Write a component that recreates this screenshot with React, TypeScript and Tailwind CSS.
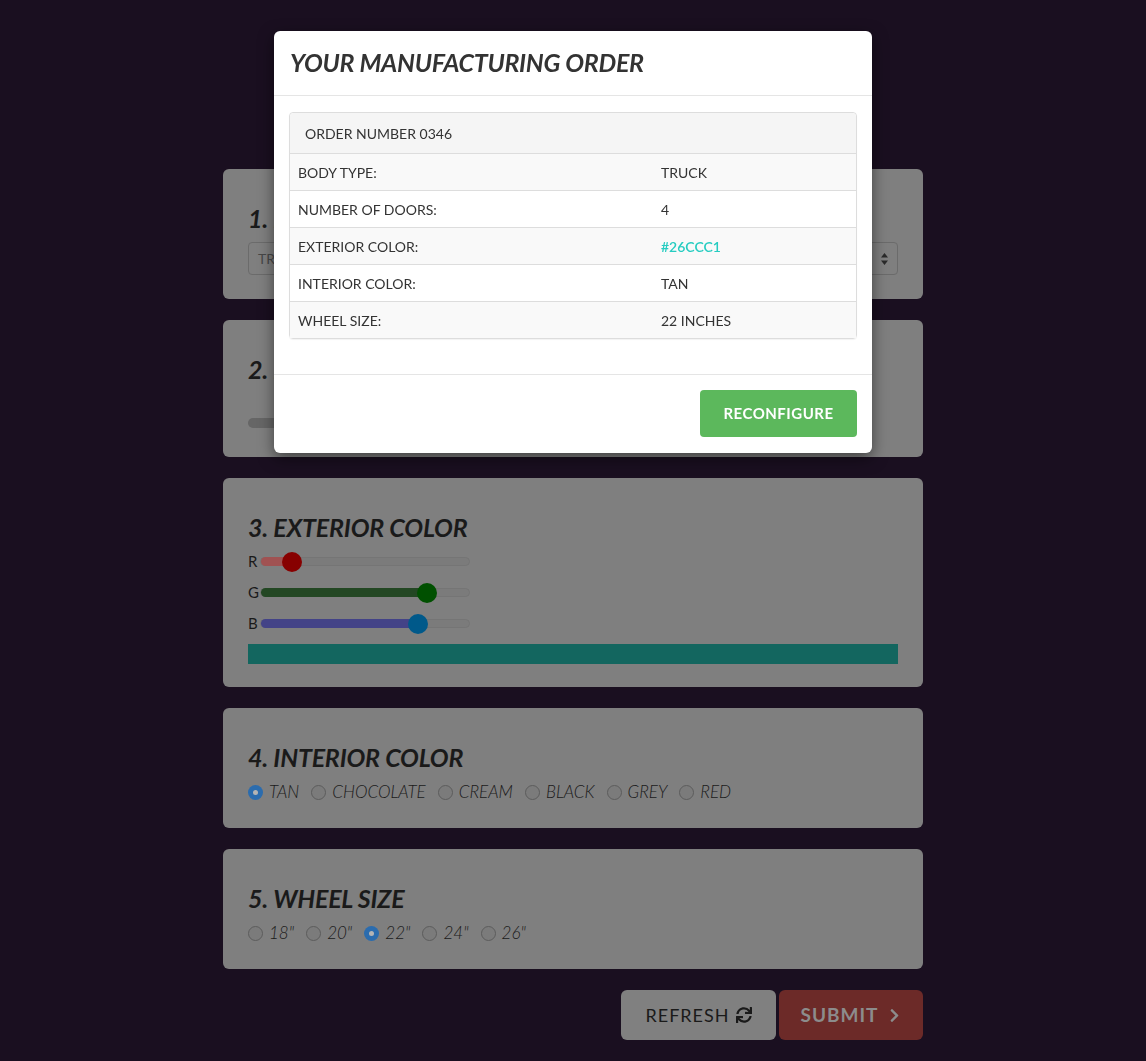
import React from "react";
import { FaSync, FaChevronRight } from "react-icons/fa";

const rgb = [
  { label: "R", value: 0x26, fill: "bg-[#a05252]", thumb: "bg-[#870000]" },
  { label: "G", value: 0xcc, fill: "bg-[#234723]", thumb: "bg-[#005000]" },
  { label: "B", value: 0xc1, fill: "bg-[#434387]", thumb: "bg-[#00598a]" },
];

const interiors = ["TAN", "CHOCOLATE", "CREAM", "BLACK", "GREY", "RED"];
const wheels = ['18"', '20"', '22"', '24"', '26"'];

const orderRows = [
  ["BODY TYPE:", "TRUCK"],
  ["NUMBER OF DOORS:", "4"],
  ["EXTERIOR COLOR:", "#26CCC1"],
  ["INTERIOR COLOR:", "TAN"],
  ["WHEEL SIZE:", "22 INCHES"],
];

function Panel({ title, children, className = "" }: { title: string; children: React.ReactNode; className?: string }) {
  return (
    <section className={`rounded-[6px] bg-[#7f7f7f] px-[25px] pt-[36px] ${className}`}>
      <h2 className="text-[25px] leading-[27px] font-bold italic tracking-[-0.2px] text-[#1a1a1a] whitespace-nowrap">
        {title}
      </h2>
      {children}
    </section>
  );
}

function Radio({ label, checked }: { label: string; checked?: boolean }) {
  return (
    <label className="flex items-center mr-[12px]">
      {checked ? (
        <span className="w-[15px] h-[15px] rounded-full bg-[#2b6cae] flex items-center justify-center">
          <span className="w-[5px] h-[5px] rounded-full bg-[#b4b4b4]" />
        </span>
      ) : (
        <span className="w-[15px] h-[15px] rounded-full border border-[#5c5c5c] bg-[#7b7b7b]" />
      )}
      <span className="ml-[6px] text-[17px] leading-[22px] font-light italic text-[#1a1a1a]">{label}</span>
    </label>
  );
}

function Slider({ label, value, fill, thumb }: { label: string; value: number; fill: string; thumb: string }) {
  const pct = (value / 255) * 100;
  return (
    <div className="flex items-center h-[31px]">
      <span className="w-[12px] text-[15px] text-[#1a1a1a]">{label}</span>
      <div className="relative w-[210px] h-[9px] rounded-full bg-[#7b7b7b] border border-[#757575]">
        <div className={`absolute left-0 top-[-1px] h-[9px] rounded-full ${fill}`} style={{ width: `${pct}%` }} />
        <div
          className={`absolute top-1/2 w-[20px] h-[20px] rounded-full -translate-x-1/2 -translate-y-1/2 ${thumb}`}
          style={{ left: `${pct}%` }}
        />
      </div>
    </div>
  );
}

export default function App() {
  return (
    <div className="min-h-screen bg-[#1a0f20] font-['Lato','Liberation_Sans',sans-serif]">
      <div className="mx-auto w-[700px] pt-[169px] pb-[21px] flex flex-col gap-[21px]">
        <Panel title="1. BODY TYPE" className="pb-[24px]">
          <div className="mt-[10px] h-[33px] rounded-[4px] border border-[#6b6b6b] flex items-center justify-between px-[9px]">
            <span className="text-[14px] text-[#474747]">TRUCK</span>
            <svg width="7" height="12" viewBox="0 0 7 12" className="text-[#2a2a2a]">
              <path d="M3.5 0L7 4.5H0Z M3.5 12L0 7.5H7Z" fill="currentColor" />
            </svg>
          </div>
        </Panel>

        <Panel title="2. NUMBER OF DOORS" className="pb-[29px]">
          <div className="mt-[35px] w-[560px] h-[10px] rounded-full bg-[#666666]" />
        </Panel>

        <Panel title="3. EXTERIOR COLOR" className="pb-[23px]">
          <div className="mt-[5px]">
            {rgb.map((c) => (
              <Slider key={c.label} {...c} />
            ))}
          </div>
          <div className="mt-[5px] h-[20px] bg-[#13665f]" />
        </Panel>

        <Panel title="4. INTERIOR COLOR" className="pb-[25px]">
          <div className="mt-[10px] flex">
            {interiors.map((c, i) => (
              <Radio key={c} label={c} checked={i === 0} />
            ))}
          </div>
        </Panel>

        <Panel title="5. WHEEL SIZE" className="pb-[25px]">
          <div className="mt-[10px] flex">
            {wheels.map((w, i) => (
              <Radio key={w} label={w} checked={i === 2} />
            ))}
          </div>
        </Panel>

        <div className="flex justify-end gap-[3px]">
          <button className="w-[155px] h-[50px] rounded-[6px] bg-[#808080] text-[#1a1a1a] text-[18px] tracking-[1px] flex items-center justify-center gap-[6px]">
            REFRESH <FaSync className="w-[16px] h-[16px]" />
          </button>
          <button className="w-[144px] h-[50px] rounded-[6px] bg-[#6c2a28] text-[#8c8c8c] text-[19px] font-bold tracking-[1px] flex items-center justify-center gap-[8px]">
            SUBMIT <FaChevronRight className="w-[15px] h-[15px]" />
          </button>
        </div>
      </div>

      <div className="fixed inset-0 flex justify-center pt-[31px]">
        <div className="w-[598px] h-fit rounded-[6px] bg-white shadow-[0_5px_15px_rgba(0,0,0,0.5)]">
          <div className="h-[65px] px-[16px] flex items-center border-b border-[#e5e5e5]">
            <h1 className="text-[25px] font-bold italic tracking-[-0.3px] text-[#333333]">YOUR MANUFACTURING ORDER</h1>
          </div>
          <div className="px-[15px] pt-[16px] pb-[35px]">
            <div className="rounded-[4px] border border-[#dddddd] shadow-[0_1px_1px_rgba(0,0,0,0.05)] text-[14px] text-[#333333]">
              <div className="h-[40px] px-[15px] flex items-center bg-[#f5f5f5] rounded-t-[4px]">ORDER NUMBER 0346</div>
              {orderRows.map(([k, v], i) => (
                <div
                  key={k}
                  className={`h-[37px] grid grid-cols-[363px_1fr] items-center border-t border-[#dddddd] px-[8px] ${
                    i % 2 === 0 ? "bg-[#f9f9f9]" : "bg-white"
                  }`}
                >
                  <span>{k}</span>
                  <span className={v.startsWith("#") ? "text-[#26ccc1] font-semibold" : ""}>{v}</span>
                </div>
              ))}
            </div>
          </div>
          <div className="border-t border-[#e5e5e5] px-[15px] pt-[15px] pb-[16px] flex justify-end">
            <button className="w-[157px] h-[47px] rounded-[4px] bg-[#5cb85c] text-white text-[15px] font-bold tracking-[0.5px]">
              RECONFIGURE
            </button>
          </div>
        </div>
      </div>
    </div>
  );
}
